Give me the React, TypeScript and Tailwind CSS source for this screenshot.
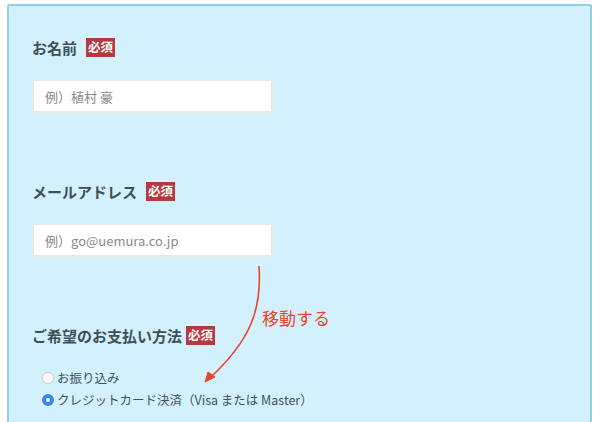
const font = { fontFamily: '"Noto Sans CJK JP", "Noto Sans", sans-serif' };

function Required() {
  return (
    <span className="inline-flex h-[19px] items-center bg-[#b8383f] px-[2px] text-[12.5px] font-bold leading-none text-white">
      必須
    </span>
  );
}

function FieldLabel({ children, gap }: { children: React.ReactNode; gap: string }) {
  return (
    <div className={`flex h-[19px] items-center ${gap}`}>
      <span className="text-[15px] font-bold leading-none text-[#3f5058]">{children}</span>
      <Required />
    </div>
  );
}

function TextInput({ placeholder }: { placeholder: string }) {
  return (
    <input
      readOnly
      placeholder={placeholder}
      className="mt-[22px] block h-[34px] w-[241px] border-2 border-[#e7e7e7] bg-white px-[11px] text-[13px] text-[#333] outline-none placeholder:text-[#8a8a8a]"
      style={font}
    />
  );
}

function Radio({ checked, label }: { checked?: boolean; label: string }) {
  return (
    <label className="flex h-[22px] items-center gap-[3px] text-[12.5px] text-[#3f5058]">
      {checked ? (
        <span className="flex h-[12px] w-[12px] items-center justify-center rounded-full bg-[#3a86f0]">
          <span className="h-[4px] w-[4px] rounded-full bg-white" />
        </span>
      ) : (
        <span className="h-[12px] w-[12px] rounded-full border border-[#c9c9c9] bg-white" />
      )}
      <span className="leading-none">{label}</span>
    </label>
  );
}

export default function App() {
  return (
    <div className="relative h-[422px] w-[599px] overflow-hidden bg-white px-[7px] pt-[4px]" style={font}>
      <div className="h-[460px] rounded-tl-[2px] rounded-tr-[2px] border-2 border-[#8fd0ea] bg-[#d3f1fd] pl-[23px] pt-[32px]">
        <FieldLabel gap="gap-[9px]">お名前</FieldLabel>
        <TextInput placeholder="例）植村 豪" />

        <div className="mt-[69px]">
          <FieldLabel gap="gap-[9px]">メールアドレス</FieldLabel>
          <TextInput placeholder="例）go@uemura.co.jp" />
        </div>

        <div className="mt-[69px]">
          <FieldLabel gap="gap-[4px]">ご希望のお支払い方法</FieldLabel>
          <div className="mt-[22px] pl-[10px]">
            <Radio label="お振り込み" />
            <Radio checked label="クレジットカード決済（Visa または Master）" />
          </div>
        </div>
      </div>

      <svg className="absolute left-0 top-0" width="599" height="422" viewBox="0 0 599 422">
        <path d="M259 266 C 262 310, 250 340, 212 376" fill="none" stroke="#e8452c" strokeWidth="1.6" />
        <path d="M205 382 L 208 372 L 215 377 Z" fill="#e8452c" stroke="#e8452c" strokeWidth="1" strokeLinejoin="round" />
      </svg>
      <span className="absolute left-[262px] top-[309px] text-[17px] leading-none text-[#e8452c]">移動する</span>
    </div>
  );
}
